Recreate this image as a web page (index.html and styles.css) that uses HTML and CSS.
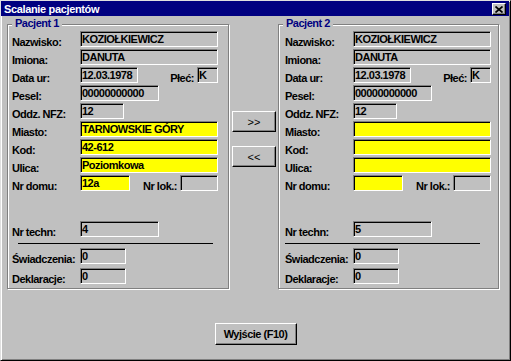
FILE: index.html
```html
<!DOCTYPE html>
<html lang="pl">
<head>
<meta charset="utf-8">
<title>Scalanie pacjentów</title>
<link rel="stylesheet" href="styles.css">
</head>
<body>
<div class="window">
  <div class="titlebar">
    <span class="title">Scalanie pacjentów</span>
    <button class="close" aria-label="Zamknij"><svg width="8" height="7" viewBox="0 0 8 7"><path d="M0.5 0.5 L7.5 6.5 M7.5 0.5 L0.5 6.5" stroke="#000" stroke-width="1.7" fill="none"/></svg></button>
  </div>
  <div class="content">
    <div class="panels">
      <section class="group">
        <span class="legend">Pacjent 1</span>
        <div class="rows">
          <div class="row"><span class="lbl">Nazwisko:</span><span class="field field--full">KOZIOŁKIEWICZ</span></div>
          <div class="row"><span class="lbl">Imiona:</span><span class="field field--full">DANUTA</span></div>
          <div class="row"><span class="lbl">Data ur:</span><span class="field field--date">12.03.1978</span><span class="aside"><span class="lbl lbl--aside">Płeć:</span><span class="field field--sex">K</span></span></div>
          <div class="row"><span class="lbl">Pesel:</span><span class="field field--pesel">00000000000</span></div>
          <div class="row"><span class="lbl">Oddz. NFZ:</span><span class="field field--nfz">12</span></div>
          <div class="row"><span class="lbl">Miasto:</span><span class="field field--full field--yellow">TARNOWSKIE GÓRY</span></div>
          <div class="row"><span class="lbl">Kod:</span><span class="field field--full field--yellow">42-612</span></div>
          <div class="row"><span class="lbl">Ulica:</span><span class="field field--full field--yellow">Poziomkowa</span></div>
          <div class="row"><span class="lbl">Nr domu:</span><span class="field field--house field--yellow">12a</span><span class="aside"><span class="lbl lbl--aside">Nr lok.:</span><span class="field field--flat"></span></span></div>
        </div>
        <div class="rows rows--tech">
          <div class="row"><span class="lbl">Nr techn:</span><span class="field field--tech">4</span></div>
        </div>
        <div class="sep"></div>
        <div class="rows rows--counts">
          <div class="row"><span class="lbl">Świadczenia:</span><span class="field field--count">0</span></div>
          <div class="row"><span class="lbl">Deklaracje:</span><span class="field field--count">0</span></div>
        </div>
      </section>
      <div class="transfer">
        <button class="btn btn--transfer">&gt;&gt;</button>
        <button class="btn btn--transfer">&lt;&lt;</button>
      </div>
      <section class="group group--right">
        <span class="legend">Pacjent 2</span>
        <div class="rows">
          <div class="row"><span class="lbl">Nazwisko:</span><span class="field field--full">KOZIOŁKIEWICZ</span></div>
          <div class="row"><span class="lbl">Imiona:</span><span class="field field--full">DANUTA</span></div>
          <div class="row"><span class="lbl">Data ur:</span><span class="field field--date">12.03.1978</span><span class="aside"><span class="lbl lbl--aside">Płeć:</span><span class="field field--sex">K</span></span></div>
          <div class="row"><span class="lbl">Pesel:</span><span class="field field--pesel">00000000000</span></div>
          <div class="row"><span class="lbl">Oddz. NFZ:</span><span class="field field--nfz">12</span></div>
          <div class="row"><span class="lbl">Miasto:</span><span class="field field--full field--yellow"></span></div>
          <div class="row"><span class="lbl">Kod:</span><span class="field field--full field--yellow"></span></div>
          <div class="row"><span class="lbl">Ulica:</span><span class="field field--full field--yellow"></span></div>
          <div class="row"><span class="lbl">Nr domu:</span><span class="field field--house field--yellow"></span><span class="aside"><span class="lbl lbl--aside">Nr lok.:</span><span class="field field--flat"></span></span></div>
        </div>
        <div class="rows rows--tech">
          <div class="row"><span class="lbl">Nr techn:</span><span class="field field--tech">5</span></div>
        </div>
        <div class="sep sep--right"></div>
        <div class="rows rows--counts">
          <div class="row"><span class="lbl">Świadczenia:</span><span class="field field--count">0</span></div>
          <div class="row"><span class="lbl">Deklaracje:</span><span class="field field--count">0</span></div>
        </div>
      </section>
    </div>
    <div class="footer">
      <button class="btn btn--exit">Wyjście (F10)</button>
    </div>
  </div>
</div>
</body>
</html>
```
FILE: styles.css
```css
* { box-sizing: border-box; }
html, body { margin: 0; background: #c0c0c0; }
body {
  font: bold 11px/12px "Liberation Sans", Arial, sans-serif;
  letter-spacing: -0.5px;
  color: #000;
}
.window {
  width: 511px;
  height: 361px;
  border: 1px solid;
  border-color: #dfdfdf #000 #000 #dfdfdf;
  box-shadow: inset 1px 1px #fff, inset -1px -1px #808080;
  display: flex;
  flex-direction: column;
}
.titlebar {
  height: 15px;
  margin-right: 1px;
  background: #000080;
  color: #fff;
  display: flex;
  align-items: flex-start;
  justify-content: space-between;
  padding: 2px 3px 0 3px;
}
.title {
  white-space: nowrap;
  letter-spacing: -0.35px;
}
.close {
  width: 14px;
  height: 12px;
  margin-top: 0;
  padding: 0;
  background: #c0c0c0;
  border: 1px solid;
  border-color: #fff #000 #000 #fff;
  box-shadow: inset -1px -1px #808080;
  display: flex;
  align-items: center;
  justify-content: center;
}
.close svg { display: block; }
.content {
  flex: 1;
  display: flex;
  flex-direction: column;
  padding-left: 6px;
}
.panels {
  display: flex;
  align-items: flex-start;
  margin-top: 8px;
}
.group {
  position: relative;
  width: 222px;
  border: 1px solid #808080;
  box-shadow: inset 1px 1px #fff, 1px 1px #fff;
  padding: 6px 10px 4px 4px;
}
.group--right {
  width: 221px;
  padding-left: 6px;
  padding-right: 7px;
}
.legend {
  position: absolute;
  top: -8px;
  left: 4px;
  padding: 0 3px;
  background: #c0c0c0;
  color: #000080;
  white-space: nowrap;
}
.rows {
  display: flex;
  flex-direction: column;
  gap: 2px;
}
.rows--tech { margin-top: 30px; }
.rows--counts { margin-top: 4px; gap: 4px; }
.row {
  display: flex;
  align-items: flex-start;
  height: 16px;
}
.lbl {
  width: 68px;
  flex: none;
  line-height: 22px;
  white-space: nowrap;
}
.aside {
  margin-left: auto;
  display: flex;
  align-items: flex-start;
}
.lbl--aside {
  width: auto;
  margin-right: 3px;
}
.field {
  height: 16px;
  flex: none;
  border: 1px solid;
  border-color: #808080 #fff #fff #808080;
  box-shadow: inset 1px 1px #000;
  padding: 1px 0 0 1px;
  line-height: 12px;
  white-space: nowrap;
  overflow: hidden;
}
.field--full { flex: 1; }
.field--yellow { background: #ffff00; }
.field--date { width: 58px; }
.field--sex { width: 21px; }
.field--pesel { width: 79px; }
.field--nfz { width: 44px; }
.field--house { width: 50px; }
.field--flat { width: 38px; }
.field--tech { width: 79px; }
.field--count { width: 46px; }
.sep {
  height: 1px;
  background: #000;
  margin: 6px 5px 0 6px;
}
.sep--right { margin: 6px 11px 0 0; }
.transfer {
  width: 44px;
  flex: none;
  margin: 0 2px 0 3px;
  padding-top: 87px;
  display: flex;
  flex-direction: column;
  gap: 14px;
}
.btn {
  font: inherit;
  letter-spacing: inherit;
  color: #000;
  background: #c0c0c0;
  border: 1px solid;
  border-color: #fff #000 #000 #fff;
  box-shadow: inset -1px -1px #808080;
  padding: 0;
}
.btn--transfer {
  height: 21px;
  font-weight: normal;
  letter-spacing: 0;
}
.footer {
  display: flex;
  justify-content: center;
  padding-right: 6px;
  margin-top: 34px;
}
.btn--exit {
  width: 82px;
  height: 22px;
}
```
